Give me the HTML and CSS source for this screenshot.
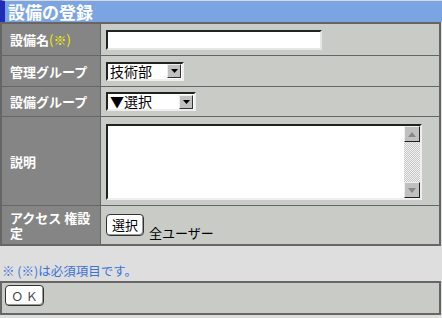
FILE: index.html
```html
<!DOCTYPE html>
<html lang="ja">

<head>
    <meta charset="UTF-8">
    <meta name="viewport" content="width=device-width, initial-scale=1.0">
    <title>設備の登録</title>

    <link rel="stylesheet" href="styles.css">

</head>

<body>
    <div class="title">設備の登録</div>

    <div class="form">
        <div class="label">設備名<span class="req">(※)</span></div>
        <div class="value">
            <input class="text" type="text">
        </div>

        <div class="label">管理グループ</div>
        <div class="value">
            <div class="select short">
                <span class="option">技術部</span>
                <span class="arrow"><svg width="7" height="4" viewBox="0 0 7 4"><path d="M0 0H7L3.5 4Z" fill="#000"/></svg></span>
            </div>
        </div>

        <div class="label">設備グループ</div>
        <div class="value">
            <div class="select long">
                <span class="option">▼選択</span>
                <span class="arrow"><svg width="7" height="4" viewBox="0 0 7 4"><path d="M0 0H7L3.5 4Z" fill="#000"/></svg></span>
            </div>
        </div>

        <div class="label">説明</div>
        <div class="value row-memo">
            <div class="memo">
                <textarea></textarea>
                <div class="scroll">
                    <span class="sbtn"><svg width="8" height="5" viewBox="0 0 8 5"><path d="M0 5H8L4 0Z" fill="#888"/></svg></span>
                    <span class="track"></span>
                    <span class="sbtn"><svg width="8" height="5" viewBox="0 0 8 5"><path d="M0 0H8L4 5Z" fill="#888"/></svg></span>
                </div>
            </div>
        </div>

        <div class="label">アクセス 権設定</div>
        <div class="value row-access">
            <button class="btn">選択</button>
            <span class="users">全ユーザー</span>
        </div>
    </div>

    <p class="note">※ (※)は必須項目です。</p>

    <div class="footer">
        <button class="btn ok">Ｏ Ｋ</button>
    </div>
</body>

</html>
```

FILE: styles.css
```css
body {
    margin: 0;
    background-color: #dedede;
    font-family: "Noto Sans CJK JP", "DejaVu Sans", sans-serif;
    font-size: 12px;
}

.title {
    height: 21px;
    border-top: 1px solid #d8d8d8;
    border-left: 5px solid #1f2db4;
    background-color: #7aa5e2;
    color: white;
    font-size: 17px;
    font-weight: bold;
    line-height: 21px;
    padding-left: 3px;
}

.form {
    width: 441px;
    box-sizing: border-box;
    border: 2px solid #666;
    background-color: #666;
    display: grid;
    grid-template-columns: 98px 1fr;
    grid-template-rows: 31px 30px 29px 88px 38px;
    gap: 1px;
}

.label {
    background-color: #858585;
    color: white;
    font-size: 13px;
    font-weight: bold;
    padding: 0 4px 0 8px;
    display: flex;
    align-items: center;
    line-height: 15px;
}

.label .req {
    color: #f4f000;
    font-weight: normal;
}

.value {
    background-color: #c9cbc6;
    padding-left: 5px;
    display: flex;
    align-items: center;
}

.text {
    width: 216px;
    height: 20px;
    box-sizing: border-box;
    margin: 0;
    border: 2px solid;
    border-color: #222 #e6e6e6 #e6e6e6 #222;
    background: white;
}

.select {
    height: 19px;
    box-sizing: border-box;
    border: 2px solid;
    border-color: #222 #eee #eee #222;
    background: white;
    display: flex;
    align-items: center;
    justify-content: space-between;
    padding-left: 2px;
}

.select.short {
    width: 78px;
}

.select.long {
    width: 90px;
}

.select .option {
    font-size: 14px;
    line-height: 15px;
}

.select .arrow {
    width: 14px;
    height: 14px;
    box-sizing: border-box;
    margin-right: 1px;
    background-color: #c0c0c0;
    border: 1px solid;
    border-color: #eee #333 #333 #eee;
    display: flex;
    align-items: center;
    justify-content: center;
}

.row-memo {
    padding-top: 2px;
}

.memo {
    width: 316px;
    height: 76px;
    box-sizing: border-box;
    border: 2px solid;
    border-color: #222 #eee #eee #222;
    background: white;
    display: flex;
}

.memo textarea {
    flex: 1;
    border: none;
    resize: none;
    outline: none;
    margin: 0;
}

.scroll {
    width: 16px;
    display: flex;
    flex-direction: column;
    background-image: repeating-conic-gradient(#c8c8c8 0 25%, #f0f0f0 0 50%);
    background-size: 2px 2px;
}

.sbtn {
    height: 16px;
    box-sizing: border-box;
    background-color: #c0c0c0;
    border: 1px solid;
    border-color: #eee #222 #222 #eee;
    display: flex;
    align-items: center;
    justify-content: center;
}

.track {
    flex: 1;
}

.row-access {
    align-items: flex-start;
    padding-top: 8px;
}

.btn {
    height: 22px;
    padding: 0 5px;
    margin: 0;
    border: 1px solid #333;
    border-radius: 4px;
    background: white;
    box-shadow: inset -1px -1px #999;
    font-family: inherit;
    font-size: 13px;
    line-height: 18px;
}

.users {
    margin-left: 5px;
    margin-top: 9px;
    font-size: 13px;
}

.note {
    margin: 18px 0 0 2px;
    height: 14px;
    line-height: 14px;
    color: #3a72d6;
    font-size: 12.5px;
}

.footer {
    margin-top: 3px;
    width: 441px;
    height: 34px;
    box-sizing: border-box;
    border: 2px solid #666;
    background-color: #c9cbc6;
    padding: 2px 3px;
}

.btn.ok {
    width: 39px;
    height: 21px;
    padding: 0;
    color: #444;
    font-size: 12px;
    white-space: nowrap;
}
```
